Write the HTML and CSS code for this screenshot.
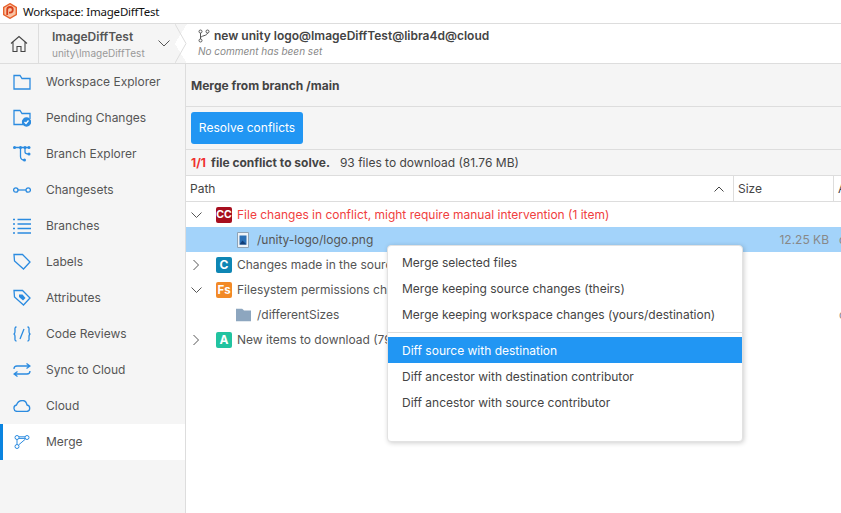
FILE: index.html
```html
<!DOCTYPE html>
<html lang="en">
<head>
    <meta charset="UTF-8">
    <title>Workspace: ImageDiffTest</title>
    <link rel="stylesheet" href="styles.css">
</head>
<body>
    <div class="titlebar">
        <svg class="app-logo" width="16" height="16" viewBox="0 0 16 16">
            <path d="M8 .7 14.3 4.3V11.7L8 15.3 1.7 11.7V4.3Z" fill="#f9c4a4" stroke="#e8622c" stroke-width="1.4"/>
            <path d="M5.2 12V6.8A2.8 2.8 0 1 1 8 9.6H7" fill="none" stroke="#d8401c" stroke-width="1.8"/>
        </svg>
        <span>Workspace: ImageDiffTest</span>
    </div>

    <div class="topbar">
        <div class="home">
            <svg width="18" height="18" viewBox="0 0 18 18" fill="none" stroke="#444" stroke-width="1.1">
                <path d="M1 8.500 9 1.500l8 7M3 7v9.500h4v-5h4v5h4V7"/>
            </svg>
        </div>
        <div class="workspace">
            <div class="workspace-text">
                <div class="workspace-name">ImageDiffTest</div>
                <div class="workspace-path">unity\ImageDiffTest</div>
            </div>
            <svg width="12" height="7" viewBox="0 0 12 7" fill="none" stroke="#555" stroke-width="1"><path d="M.5.500 6 6l5.500-5.500"/></svg>
        </div>
        <svg class="crumb" width="12" height="39" viewBox="0 0 12 39" fill="none" stroke="#ddd"><path d="M0 0l11 19.500L0 39"/></svg>
        <div class="changeset">
            <div class="changeset-name">
                <svg width="12" height="14" viewBox="0 0 12 14" fill="none" stroke="#555"><circle cx="2.500" cy="2.500" r="1.500"/><circle cx="2.500" cy="11.500" r="1.500"/><circle cx="9.500" cy="2.500" r="1.500"/><path d="M2.500 4v6M9.500 4c0 3-7 2.500-7 5"/></svg>
                <span>new unity logo@ImageDiffTest@libra4d@cloud</span>
            </div>
            <div class="changeset-comment">No comment has been set</div>
        </div>
    </div>

    <div class="app">
        <nav class="sidebar">
            <a class="nav-item">
                <svg width="18" height="16" viewBox="0 0 18 16" fill="none" stroke="#2b8be0" stroke-width="1.300"><path d="M1 1.500h6l2 3h8v10.500H1Z"/></svg>
                <span>Workspace Explorer</span>
            </a>
            <a class="nav-item">
                <svg width="18" height="18" viewBox="0 0 18 18" fill="none" stroke="#2b8be0" stroke-width="1.300"><path d="M10 15.500H1V1.500h6l2 3h8V10"/><circle cx="13.500" cy="13" r="4" fill="#2b8be0"/><path d="M11.500 13l1.500 1.500 2.500-3" stroke="#fff"/></svg>
                <span>Pending Changes</span>
            </a>
            <a class="nav-item">
                <svg width="18" height="16" viewBox="0 0 18 16" fill="none" stroke="#2b8be0" stroke-width="1.300"><path d="M1 1.500h15M7.500 1.500v9c0 2 1.500 3.500 4 3.500M12 1.500v4.500c0 1.500 1.500 2 4 2"/><g fill="#2b8be0" stroke="none"><circle cx="1.500" cy="1.500" r="1.500"/><circle cx="7.500" cy="1.500" r="1.500"/><circle cx="12" cy="1.500" r="1.500"/><circle cx="16" cy="1.500" r="1.500"/><circle cx="16" cy="8" r="1.500"/><circle cx="11.500" cy="14" r="1.500"/></g></svg>
                <span>Branch Explorer</span>
            </a>
            <a class="nav-item">
                <svg width="18" height="6" viewBox="0 0 18 6" fill="none" stroke="#2b8be0" stroke-width="1.300"><circle cx="2.800" cy="3" r="2.200"/><circle cx="15.200" cy="3" r="2.200"/><path d="M5 3h8"/></svg>
                <span>Changesets</span>
            </a>
            <a class="nav-item">
                <svg width="18" height="16" viewBox="0 0 18 16" fill="none" stroke="#2b8be0" stroke-width="1.300"><path d="M4.500 1.500H18M4.500 6H18M4.500 10.500H18M4.500 15H18M0 1.500h2M0 6h2M0 10.500h2M0 15h2"/></svg>
                <span>Branches</span>
            </a>
            <a class="nav-item">
                <svg width="18" height="18" viewBox="0 0 18 18" fill="none" stroke="#2b8be0" stroke-width="1.300"><path d="M1 1.500h8.500l7.500 7.500-6.500 7L1.500 8Z"/></svg>
                <span>Labels</span>
            </a>
            <a class="nav-item">
                <svg width="18" height="18" viewBox="0 0 18 18" fill="none" stroke="#2b8be0" stroke-width="1.300"><path d="M1 1.500h8.500l7.500 7.500-6.500 7L1.500 8Z"/><path d="M6 5.500h3.500l3 3.500-2.500 2.500L6 8Z" fill="#2b8be0" stroke="none"/></svg>
                <span>Attributes</span>
            </a>
            <a class="nav-item">
                <svg width="18" height="16" viewBox="0 0 18 16" fill="none" stroke="#2b8be0" stroke-width="1.300"><path d="M3.500 1C1.500 1 2 3 2 5c0 2-.5 3-1.500 3C1.500 8 2 9 2 11c0 2-.5 4 1.500 4M14.500 1c2 0 1.500 2 1.500 4 0 2 .5 3 1.500 3-1 0-1.500 1-1.500 3 0 2 .5 4-1.500 4M11 3 7 13"/></svg>
                <span>Code Reviews</span>
            </a>
            <a class="nav-item">
                <svg width="18" height="14" viewBox="0 0 18 14" fill="none" stroke="#2b8be0" stroke-width="1.300"><path d="M1 6c0-2 1-3 3-3h13M13.500 .5 17 3l-3.500 2.500M17 8c0 2-1 3-3 3H1M4.500 8.500 1 11l3.500 2.500"/></svg>
                <span>Sync to Cloud</span>
            </a>
            <a class="nav-item">
                <svg width="18" height="12" viewBox="0 0 18 12" fill="none" stroke="#2b8be0" stroke-width="1.300"><path d="M4 11.500a3.300 3.300 0 0 1-.5-6.500C4.500 2 7 .5 9.500.5c2.500 0 4 2 4.500 4.500a3.300 3.300 0 0 1 0 6.500Z"/></svg>
                <span>Cloud</span>
            </a>
            <a class="nav-item active">
                <svg width="16" height="14" viewBox="0 0 16 14" fill="none" stroke="#2b8be0" stroke-width="1"><circle cx="3" cy="2.500" r="2"/><circle cx="13" cy="2.500" r="2"/><circle cx="3" cy="11.500" r="2"/><path d="M5 1.800h6M5 3.400h6M3 4.500v5M4.500 10 11.500 4"/></svg>
                <span>Merge</span>
            </a>
        </nav>

        <main class="content">
            <div class="merge-title">Merge from branch /main</div>
            <div class="toolbar"><button class="btn-primary">Resolve conflicts</button></div>
            <div class="summary">
                <span class="count">1/1</span>
                <b>file conflict to solve.</b>
                <span class="downloads">93 files to download (81.76 MB)</span>
            </div>

            <div class="table-head">
                <div class="col-path">
                    <span>Path</span>
                    <svg width="10" height="6" viewBox="0 0 10 6" fill="none" stroke="#444"><path d="M.5 5.500 5 1l4.500 4.500"/></svg>
                </div>
                <div class="col-size">Size</div>
                <div class="col-attr">A</div>
            </div>

            <div class="rows">
                <div class="row conflict">
                    <svg class="arrow" width="11" height="6" viewBox="0 0 11 6" fill="none" stroke="#555"><path d="M.5.500l5 5 5-5"/></svg>
                    <span class="badge badge-cc">CC</span>
                    <span>File changes in conflict, might require manual intervention (1 item)</span>
                </div>
                <div class="row child selected">
                    <svg class="file-icon" width="12" height="16" viewBox="0 0 12 16"><path d="M.5.500h11v15H.5Z" fill="#eef3f8" stroke="#8fa3b5"/><path d="M2.500 3.500h7v9h-7Z" fill="#2a6fb5"/><path d="M2.500 12.500l3-4 4 4Z" fill="#123e78"/></svg>
                    <span>/unity-logo/logo.png</span>
                    <span class="cell-size">12.25 KB</span>
                    <span class="cell-attr">c</span>
                </div>
                <div class="row">
                    <svg class="arrow arrow-right" width="6" height="11" viewBox="0 0 6 11" fill="none" stroke="#555"><path d="M.5.500l5 5-5 5"/></svg>
                    <span class="badge badge-c">C</span>
                    <span>Changes made in the source (1 item)</span>
                </div>
                <div class="row">
                    <svg class="arrow" width="11" height="6" viewBox="0 0 11 6" fill="none" stroke="#555"><path d="M.5.500l5 5 5-5"/></svg>
                    <span class="badge badge-fs">Fs</span>
                    <span>Filesystem permissions changed (1 item)</span>
                </div>
                <div class="row child">
                    <svg class="folder-icon" width="15" height="13" viewBox="0 0 15 13"><path d="M0 0h6l2 2h7v11H0Z" fill="#8da6bf"/></svg>
                    <span>/differentSizes</span>
                    <span class="cell-attr">c</span>
                </div>
                <div class="row">
                    <svg class="arrow arrow-right" width="6" height="11" viewBox="0 0 6 11" fill="none" stroke="#555"><path d="M.5.500l5 5-5 5"/></svg>
                    <span class="badge badge-a">A</span>
                    <span>New items to download (79 items)</span>
                </div>
            </div>

            <ul class="menu">
                <li>Merge selected files</li>
                <li>Merge keeping source changes (theirs)</li>
                <li>Merge keeping workspace changes (yours/destination)</li>
                <li class="separator"></li>
                <li class="current">Diff source with destination</li>
                <li>Diff ancestor with destination contributor</li>
                <li>Diff ancestor with source contributor</li>
            </ul>
        </main>
    </div>
</body>
</html>
```
FILE: styles.css
```css
* {
    box-sizing: border-box;
}
html, body {
    height: 100%;
}
body {
    margin: 0;
    overflow: hidden;
    display: flex;
    flex-direction: column;
    background-color: #fff;
    color: #444;
    font-family: Inter, "Noto Sans", sans-serif;
    font-size: 12px;
}
.titlebar {
    height: 24px;
    flex: none;
    display: flex;
    align-items: center;
    gap: 5px;
    padding-left: 2px;
    padding-bottom: 1px;
    border-bottom: 1px solid #ddd;
    font-family: "Noto Sans", sans-serif;
    font-size: 11.500px;
    letter-spacing: -0.2px;
    color: #111;
}
.topbar {
    height: 40px;
    flex: none;
    display: flex;
    background-color: #fff;
    border-bottom: 1px solid #ddd;
}
.home {
    width: 39px;
    display: flex;
    align-items: center;
    justify-content: center;
    background-color: #f5f5f5;
    border-right: 1px solid #ddd;
}
.workspace {
    width: 136px;
    display: flex;
    align-items: center;
    justify-content: space-between;
    padding: 0 5px 0 13px;
    background-color: #f5f5f5;
}
.workspace-name {
    font-weight: 600;
    color: #555;
}
.workspace-path {
    margin-top: 3px;
    font-size: 10px;
    color: #999;
}
.crumb {
    flex: none;
    background: linear-gradient(to top right, #f5f5f5 50%, transparent 50%) bottom left / 100% 50% no-repeat,
                linear-gradient(to bottom right, #f5f5f5 50%, transparent 50%) top left / 100% 50% no-repeat;
}
.changeset {
    padding-left: 11px;
    padding-top: 4px;
}
.changeset-name {
    display: flex;
    align-items: center;
    gap: 4px;
    font-weight: 600;
    color: #444;
}
.changeset-comment {
    margin-top: 2px;
    font-size: 10px;
    font-style: italic;
    color: #888;
}
.app {
    flex: 1;
    display: flex;
    min-height: 0;
}
.sidebar {
    width: 186px;
    flex: none;
    background-color: #f5f5f5;
    border-right: 1px solid #ddd;
}
.nav-item {
    height: 36px;
    display: flex;
    align-items: center;
    color: #555;
    position: relative;
    padding-left: 46px;
    padding-bottom: 2px;
}
.nav-item svg {
    position: absolute;
    left: 13px;
    top: 50%;
    transform: translateY(-50%);
}
.nav-item.active {
    background-color: #fff;
    border-left: 3px solid #0a84e0;
    padding-left: 43px;
}
.nav-item.active svg {
    left: 11px;
}
.content {
    flex: 1;
    min-width: 0;
    position: relative;
    display: flex;
    flex-direction: column;
    overflow: hidden;
}
.merge-title {
    height: 43px;
    display: flex;
    align-items: center;
    padding-left: 5px;
    background-color: #f5f5f5;
    border-bottom: 1px solid #ddd;
    font-weight: 700;
    color: #444;
}
.toolbar {
    height: 43px;
    padding: 5px;
    background-color: #f5f5f5;
    border-bottom: 1px solid #ddd;
}
.btn-primary {
    width: 112px;
    height: 32px;
    padding: 0 0 2px;
    border: none;
    border-radius: 3px;
    background-color: #2196f3;
    color: #fff;
    font-family: inherit;
    font-size: 12px;
}
.summary {
    height: 26px;
    display: flex;
    align-items: center;
    padding-left: 5px;
    background-color: #f5f5f5;
    border-bottom: 1px solid #ddd;
    color: #444;
}
.summary .count {
    color: #f03030;
    font-weight: 700;
    margin-right: 5px;
}
.summary b {
    font-weight: 700;
}
.downloads {
    margin-left: 10px;
}
.table-head {
    height: 26px;
    display: flex;
    align-items: stretch;
    border-bottom: 1px solid #ddd;
}
.table-head > div {
    flex: none;
    display: flex;
    align-items: center;
    padding-left: 4px;
    border-right: 1px solid #ddd;
}
.col-path {
    width: 548px;
    justify-content: space-between;
    padding-right: 9px;
}
.col-size {
    width: 100px;
}
.col-attr {
    width: 20px;
    border-right: none !important;
}
.row {
    height: 25px;
    display: flex;
    align-items: center;
    position: relative;
    padding-left: 30px;
    gap: 5px;
    color: #555;
    white-space: nowrap;
}
.row.conflict {
    color: #f04040;
}
.row.child {
    padding-left: 71px;
    gap: 8px;
}
.row.selected {
    background-color: #a3d3fa;
}
.arrow {
    position: absolute;
    left: 5px;
    top: 50%;
    transform: translateY(-50%);
}
.arrow-right {
    left: 7px;
}
.file-icon, .folder-icon {
    position: absolute;
    left: 51px;
    top: 50%;
    transform: translateY(-50%);
}
.folder-icon {
    left: 50px;
}
.badge {
    width: 16px;
    height: 16px;
    flex: none;
    display: flex;
    align-items: center;
    justify-content: center;
    border-radius: 2px;
    color: #fff;
    font-size: 12px;
    font-weight: 700;
}
.badge-cc {
    background-color: #a70f1f;
    font-size: 10.500px;
}
.badge-c {
    background-color: #0e86b4;
}
.badge-fs {
    background-color: #f28a26;
    font-size: 11.500px;
}
.badge-a {
    background-color: #22c3a0;
}
.cell-size {
    position: absolute;
    right: 12px;
    color: #888;
}
.cell-attr {
    position: absolute;
    left: 653px;
    color: #888;
}
.menu {
    position: absolute;
    left: 201px;
    top: 181px;
    width: 356px;
    height: 197px;
    margin: 0;
    padding: 3px 0 0;
    list-style: none;
    background-color: #fff;
    border: 1px solid #e2e2e2;
    border-radius: 4px;
    box-shadow: 1px 1px 5px rgba(0, 0, 0, 0.2);
    color: #444;
}
.menu li {
    height: 26px;
    display: flex;
    align-items: center;
    padding-left: 14px;
}
.menu li.separator {
    height: 6px;
    padding: 0;
    margin-bottom: 4px;
    border-bottom: 1px solid #ddd;
}
.menu li.current {
    background-color: #2196f3;
    color: #fff;
}
```
